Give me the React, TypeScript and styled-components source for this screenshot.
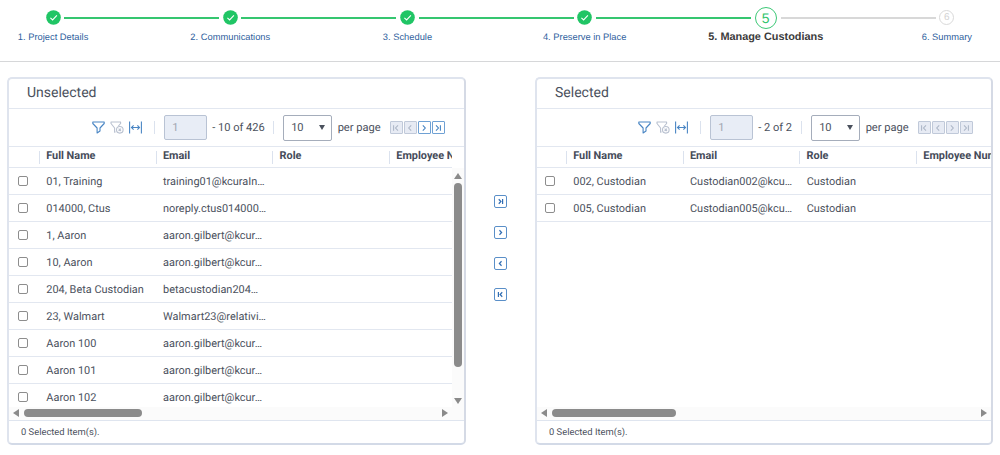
import React from "react";
import styled, { createGlobalStyle, css } from "styled-components";

const GlobalStyle = createGlobalStyle`
  *, *::before, *::after { box-sizing: border-box; }
  html, body { margin: 0; padding: 0; background: #fff; }
  body {
    font-family: Roboto, "Liberation Sans", sans-serif;
    color: #4b515d;
    overflow: hidden;
    text-rendering: geometricPrecision;
  }
`;

const line = "#e2e7f0";
const blue = "#4a86c4";
const green = "#20c565";

const Page = styled.main`
  width: 1000px;
  height: 455px;
  overflow: hidden;
`;

const Stepper = styled.nav`
  display: flex;
  height: 62px;
  padding: 2px 0 0 42px;
  border-bottom: 1px solid #d6d7d9;
  font-family: "Liberation Sans", Arial, sans-serif;
`;

const Step = styled.div<{ $active?: boolean }>`
  flex: none;
  width: ${(p) => (p.$active ? 30 : 22.2)}px;
  display: flex;
  flex-direction: column;
  align-items: center;
`;

const MarkerSlot = styled.div`
  height: 31px;
  display: flex;
  align-items: center;
`;

const StepLabel = styled.span<{ $active?: boolean }>`
  white-space: nowrap;
  line-height: 8px;
  font-size: 9.33px;
  color: #2f5f9e;
  ${(p) =>
    p.$active &&
    css`
      font-size: 10.9px;
      font-weight: 700;
      color: #3b3b3b;
    `}
`;

const Connector = styled.div<{ $done?: boolean }>`
  flex: none;
  width: 155px;
  height: 2px;
  margin-top: 14.5px;
  background: ${(p) => (p.$done ? "#35c670" : "#d8d8d8")};
`;

const Ring = styled.span<{ $active?: boolean }>`
  display: flex;
  align-items: center;
  justify-content: center;
  border-radius: 50%;
  width: ${(p) => (p.$active ? 22 : 15)}px;
  height: ${(p) => (p.$active ? 22 : 15)}px;
  border: ${(p) => (p.$active ? "1.4px solid #3cc876" : "1px solid #d9d9d9")};
  color: ${(p) => (p.$active ? "#2fc46c" : "#d2d2d2")};
  font-size: ${(p) => (p.$active ? 14 : 10)}px;
  line-height: 1;
`;

const Main = styled.div`
  display: flex;
  padding: 15px 8px 0 7px;
`;

const Panel = styled.section`
  flex: none;
  width: 459px;
  height: 368px;
  display: flex;
  flex-direction: column;
  border: 2px solid #dfe4ee;
  border-right-color: #d5dae5;
  border-bottom-color: #d3dae7;
  border-radius: 5px;
  overflow: hidden;
`;

const SelectedPanel = styled(Panel)`
  width: 458px;
`;

const PanelTitle = styled.h2`
  flex: none;
  margin: 0;
  height: 30px;
  padding: 0 18px;
  font-size: 14px;
  font-weight: 400;
  line-height: 28px;
  border-bottom: 1px solid ${line};
`;

const Toolbar = styled.div<{ $end: number }>`
  flex: none;
  height: 38px;
  display: flex;
  align-items: center;
  justify-content: flex-end;
  padding-right: ${(p) => p.$end}px;
  border-bottom: 1px solid ${line};
  font-size: 11.1px;
  white-space: nowrap;
`;

const ToolIcons = styled.div`
  display: flex;
  gap: 5px;
`;

const Separator = styled.i`
  width: 1px;
  height: 13px;
  background: #dbe2ee;
`;

const PageInput = styled.div`
  width: 43px;
  height: 25px;
  margin: 0 5px 0 9px;
  padding-left: 7px;
  line-height: 24px;
  border: 1.5px solid #b9c3d4;
  border-radius: 2px;
  background: #e8edf6;
  color: #a0a6b1;
`;

const PageRange = styled.span<{ $w: number }>`
  width: ${(p) => p.$w}px;
`;

const PageSize = styled.div`
  width: 49px;
  height: 26px;
  margin: 0 5.5px 0 9px;
  padding: 0 6px 0 7px;
  display: flex;
  align-items: center;
  justify-content: space-between;
  border: 1.5px solid #a5adbb;
  border-radius: 2px;
`;

const PerPage = styled.span`
  width: 52px;
`;

const Pager = styled.div`
  display: flex;
  gap: 1px;
`;

const PagerButton = styled.span<{ $off?: boolean }>`
  width: 13.1px;
  height: 13px;
  display: flex;
  align-items: center;
  justify-content: center;
  border-radius: 1px;
  border: 1px solid ${(p) => (p.$off ? "#c0c9d9" : "#6fa1d4")};
  background: ${(p) => (p.$off ? "#e7ebf4" : "#fff")};
  color: ${(p) => (p.$off ? "#abb5c6" : "#3f7fc0")};
`;

const Grid = styled.div`
  flex: none;
  height: 272.5px;
  display: grid;
  grid-template-rows: 21px minmax(0, 1fr) 13px;
`;

const HeadRow = styled.div<{ $inset: number; $lead: number }>`
  display: flex;
  overflow: hidden;
  margin-right: ${(p) => p.$inset}px;
  padding: 4px 0 0 ${(p) => p.$lead}px;
  border-bottom: 1px solid ${line};
`;

const HeadCell = styled.div`
  flex: none;
  width: 116.7px;
  height: 13px;
  padding-left: 6.2px;
  border-left: 1px solid #dbe2ee;
  font-size: 10.9px;
  font-weight: 700;
  line-height: 10px;
  color: #454b59;
  white-space: nowrap;
`;

const Body = styled.div`
  display: flex;
  min-height: 0;
`;

const Rows = styled.div<{ $lead: number }>`
  flex: 1;
  min-width: 0;
  overflow: hidden;
  --lead: ${(p) => p.$lead - 21}px;
`;

const Row = styled.div`
  display: flex;
  align-items: center;
  height: 27.05px;
  padding-left: var(--lead);
  border-bottom: 1px solid ${line};
  font-size: 10.95px;
  line-height: 13px;
  white-space: nowrap;
`;

const Check = styled.span`
  flex: none;
  width: 10px;
  height: 10px;
  margin-right: 18.3px;
  border: 1px solid #8d8d8d;
  border-radius: 2px;
`;

const Cell = styled.span`
  flex: none;
  width: 116.7px;
`;

const VScroll = styled.div`
  flex: none;
  width: 12px;
  padding: 5px 0 3px;
  display: flex;
  flex-direction: column;
  align-items: center;
  background: #fbfbfb;
  color: #8a8a8a;
`;

const VThumb = styled.div`
  width: 8px;
  height: 184px;
  margin: 4px 0 auto;
  border-radius: 4px;
  background: #8b8b8b;
`;

const HScroll = styled.div<{ $end: number }>`
  display: flex;
  align-items: center;
  padding: 0 ${(p) => p.$end}px 0 3.5px;
  background: #fbfbfb;
  color: #8a8a8a;
`;

const HThumb = styled.div<{ $w: number }>`
  width: ${(p) => p.$w}px;
  height: 8px;
  margin: 0 auto 0 5px;
  border-radius: 4px;
  background: #8b8b8b;
`;

const Footer = styled.div`
  flex: 1;
  border-top: 1.5px solid #dfe5ef;
  padding-left: 12px;
  font-size: 9.4px;
  line-height: 23px;
`;

const Movers = styled.div`
  flex: none;
  width: 69px;
  padding-top: 118px;
  display: flex;
  flex-direction: column;
  align-items: center;
  gap: 18px;
`;

const MoveButton = styled.button`
  width: 13px;
  height: 13px;
  padding: 0;
  display: flex;
  align-items: center;
  justify-content: center;
  border: 1.4px solid #5a8fc8;
  border-radius: 2px;
  background: #fff;
  color: #2f6cb3;
`;

type Dir = "first" | "prev" | "next" | "last";

const chevrons: Record<Dir, string> = {
  first: "M2 1.5V8.5M7.5 1.8L4.4 5L7.5 8.2",
  prev: "M6.5 1.8L3.4 5L6.5 8.2",
  next: "M3.5 1.8L6.6 5L3.5 8.2",
  last: "M8 1.5V8.5M2.5 1.8L5.6 5L2.5 8.2",
};

const Chevron = ({ dir, size, weight }: { dir: Dir; size: number; weight: number }) => (
  <svg width={size} height={size} viewBox="0 0 10 10" fill="none" stroke="currentColor" strokeWidth={weight}>
    <path d={chevrons[dir]} />
  </svg>
);

const DoneMark = () => (
  <svg width="15" height="15" viewBox="0 0 15 15" fill="none">
    <circle cx="7.5" cy="7.5" r="7.3" fill={green} />
    <path d="M4.4 7.8L6.6 9.9L10.9 5.4" stroke="#fff" strokeWidth="1.1" />
  </svg>
);

const FilterIcon = () => (
  <svg width="13" height="13" viewBox="0 0 13 13" fill="none" stroke={blue} strokeWidth="1.1" strokeLinejoin="round">
    <path d="M.8 1H12.2V2.5L8 7V10L5.1 12V7L.8 2.5Z" />
  </svg>
);

const ClearFilterIcon = () => (
  <svg width="14" height="13" viewBox="0 0 14 13" fill="none" stroke="#b9c1d0" strokeWidth="1.1" strokeLinejoin="round">
    <path d="M5.5 10.8L4.6 11.2V7L1 2.5V1H10.6V2.5L8.4 5" />
    <circle cx="9.8" cy="8.8" r="3.3" />
    <path d="M8.6 7.6L11 10M11 7.6L8.6 10" />
  </svg>
);

const FitIcon = () => (
  <svg width="13" height="13" viewBox="0 0 13 13" fill="none" stroke={blue} strokeWidth="1.1">
    <path d="M.6 .5V12.5M12.4 .5V12.5M2.5 6.5H10.5M4.6 4.4L2.5 6.5L4.6 8.6M8.4 4.4L10.5 6.5L8.4 8.6" />
  </svg>
);

const Triangle = ({ points, w, h }: { points: string; w: number; h: number }) => (
  <svg width={w} height={h} viewBox={`0 0 ${w} ${h}`} fill="currentColor">
    <polygon points={points} />
  </svg>
);

const columns = ["Full Name", "Email", "Role", "Employee Number"];

const unselected = [
  ["01, Training", "training01@kcuraIn…"],
  ["014000, Ctus", "noreply.ctus014000…"],
  ["1, Aaron", "aaron.gilbert@kcur…"],
  ["10, Aaron", "aaron.gilbert@kcur…"],
  ["204, Beta Custodian", "betacustodian204…"],
  ["23, Walmart", "Walmart23@relativi…"],
  ["Aaron 100", "aaron.gilbert@kcur…"],
  ["Aaron 101", "aaron.gilbert@kcur…"],
  ["Aaron 102", "aaron.gilbert@kcur…"],
];

const selected = [
  ["002, Custodian", "Custodian002@kcu…", "Custodian"],
  ["005, Custodian", "Custodian005@kcu…", "Custodian"],
];

const steps = [
  "Project Details",
  "Communications",
  "Schedule",
  "Preserve in Place",
  "Manage Custodians",
  "Summary",
];
const current = 4;
const dirs: Dir[] = ["first", "prev", "next", "last"];

interface ListProps {
  title: string;
  range: string;
  rangeWidth: number;
  rows: string[][];
  disabled: Dir[];
  scrollable?: boolean;
  thumb: number;
  lead: number;
}

const ListContent = ({ title, range, rangeWidth, rows, disabled, scrollable, thumb, lead }: ListProps) => (
  <>
    <PanelTitle>{title}</PanelTitle>
    <Toolbar $end={scrollable ? 19 : 18}>
      <ToolIcons>
        <FilterIcon />
        <ClearFilterIcon />
        <FitIcon />
      </ToolIcons>
      <Separator style={{ marginLeft: 12 }} />
      <PageInput>1</PageInput>
      <PageRange $w={rangeWidth}>{range}</PageRange>
      <Separator />
      <PageSize>
        10
        <Triangle w={6} h={5} points="0,0 6,0 3,5" />
      </PageSize>
      <PerPage>per page</PerPage>
      <Pager>
        {dirs.map((d) => (
          <PagerButton key={d} $off={disabled.includes(d)}>
            <Chevron dir={d} size={8} weight={1.3} />
          </PagerButton>
        ))}
      </Pager>
    </Toolbar>
    <Grid>
      <HeadRow $inset={scrollable ? 12 : 0} $lead={lead}>
        {columns.map((c) => (
          <HeadCell key={c}>{c}</HeadCell>
        ))}
      </HeadRow>
      <Body>
        <Rows $lead={lead}>
          {rows.map((r) => (
            <Row key={r[0]}>
              <Check />
              {r.map((v, i) => (
                <Cell key={i}>{v}</Cell>
              ))}
            </Row>
          ))}
        </Rows>
        {scrollable && (
          <VScroll>
            <Triangle w={8} h={6} points="0,6 4,0 8,6" />
            <VThumb />
            <Triangle w={8} h={6} points="0,0 8,0 4,6" />
          </VScroll>
        )}
      </Body>
      <HScroll $end={scrollable ? 16.5 : 4}>
        <Triangle w={6} h={8} points="6,0 0,4 6,8" />
        <HThumb $w={thumb} />
        <Triangle w={6} h={8} points="0,0 6,4 0,8" />
      </HScroll>
    </Grid>
    <Footer>0 Selected Item(s).</Footer>
  </>
);

export default function App() {
  return (
    <Page>
      <GlobalStyle />
      <Stepper>
        {steps.map((s, i) => (
          <React.Fragment key={s}>
            {i > 0 && <Connector $done={i <= current} />}
            <Step $active={i === current}>
              <MarkerSlot>
                {i < current ? <DoneMark /> : <Ring $active={i === current}>{i + 1}</Ring>}
              </MarkerSlot>
              <StepLabel $active={i === current}>
                {i + 1}. {s}
              </StepLabel>
            </Step>
          </React.Fragment>
        ))}
      </Stepper>
      <Main>
        <Panel>
          <ListContent
            title="Unselected"
            range="- 10 of 426"
            rangeWidth={61}
            rows={unselected}
            disabled={["first", "prev"]}
            scrollable
            thumb={118}
            lead={30}
          />
        </Panel>
        <Movers>
          {(["last", "next", "prev", "first"] as Dir[]).map((d) => (
            <MoveButton key={d}>
              <Chevron dir={d} size={7} weight={1.7} />
            </MoveButton>
          ))}
        </Movers>
        <SelectedPanel>
          <ListContent
            title="Selected"
            range="- 2 of 2"
            rangeWidth={43}
            rows={selected}
            disabled={dirs}
            thumb={124}
            lead={29}
          />
        </SelectedPanel>
      </Main>
    </Page>
  );
}
